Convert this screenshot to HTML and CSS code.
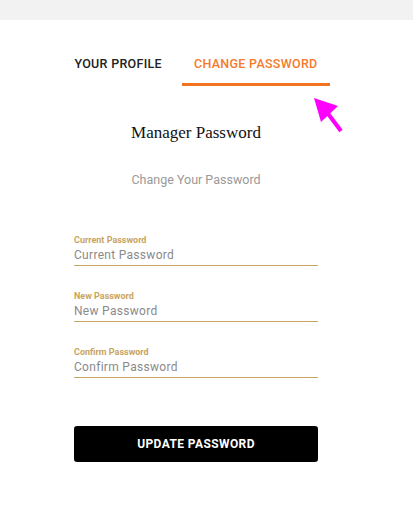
FILE: index.html
```html
<!DOCTYPE html>
<html lang="en">
<head>
<meta charset="utf-8">
<title>Change Password</title>
<link rel="stylesheet" href="styles.css">
</head>
<body>
<div class="topbar"></div>
<main class="page">
  <nav class="tabs">
    <a class="tab">YOUR PROFILE</a>
    <a class="tab active">CHANGE PASSWORD</a>
  </nav>
  <h1 class="title">Manager Password</h1>
  <p class="subtitle">Change Your Password</p>
  <form class="form">
    <label class="field">
      <span class="label">Current Password</span>
      <input class="input" type="password" placeholder="Current Password">
    </label>
    <label class="field">
      <span class="label">New Password</span>
      <input class="input" type="password" placeholder="New Password">
    </label>
    <label class="field">
      <span class="label">Confirm Password</span>
      <input class="input" type="password" placeholder="Confirm Password">
    </label>
    <button class="submit" type="button">UPDATE PASSWORD</button>
  </form>
  <svg class="pointer" width="40" height="44" viewBox="0 0 40 44">
    <polygon points="2,5 26,13 9,29" fill="#ff00ff"/>
    <line x1="14" y1="18" x2="29" y2="38" stroke="#ff00ff" stroke-width="4"/>
  </svg>
</main>
</body>
</html>
```
FILE: styles.css
```css
* { box-sizing: border-box; }
body {
  margin: 0;
  background: #fff;
  font-family: Roboto, "Liberation Sans", Arial, sans-serif;
}
.topbar {
  height: 20px;
  background: #f2f2f2;
}
.page {
  position: relative;
  width: 392px;
  padding-top: 33px;
}
.tabs {
  display: flex;
  justify-content: center;
  gap: 8px;
}
.tab {
  display: block;
  padding: 3px 12px 11px;
  font-size: 12.5px;
  line-height: 16px;
  font-weight: 500;
  letter-spacing: 0.3px;
  color: #222;
  border-bottom: 3px solid transparent;
}
.tab.active {
  color: #f47a2c;
  border-bottom-color: #f47321;
}
.title {
  margin: 36px 0 0;
  text-align: center;
  font-family: "Liberation Serif", "Times New Roman", serif;
  font-weight: 400;
  font-size: 17px;
  line-height: 22px;
  color: #111;
}
.subtitle {
  margin: 28px 0 0;
  text-align: center;
  font-size: 12.5px;
  line-height: 16px;
  color: #999;
}
.form {
  width: 244px;
  margin: 48px auto 0;
  display: flex;
  flex-direction: column;
}
.field {
  display: flex;
  flex-direction: column;
  margin-bottom: 26px;
}
.label {
  font-size: 9px;
  line-height: 9px;
  font-weight: 700;
  color: #c9a461;
}
.input {
  border: 0;
  border-bottom: 1px solid #c9a461;
  padding: 0;
  margin: 0;
  height: 21px;
  font-family: Roboto, "Liberation Sans", Arial, sans-serif;
  font-size: 12px;
  letter-spacing: 0.3px;
  color: #888;
  background: transparent;
  outline: none;
}
.input::placeholder { color: #8a8a8a; opacity: 1; }
.submit {
  margin-top: 22px;
  height: 36px;
  border: 0;
  border-radius: 3px;
  background: #000;
  color: #fff;
  font-family: Roboto, "Liberation Sans", Arial, sans-serif;
  font-weight: 700;
  font-size: 12px;
  letter-spacing: 0.4px;
}
.pointer {
  position: absolute;
  left: 312px;
  top: 73px;
}
```
